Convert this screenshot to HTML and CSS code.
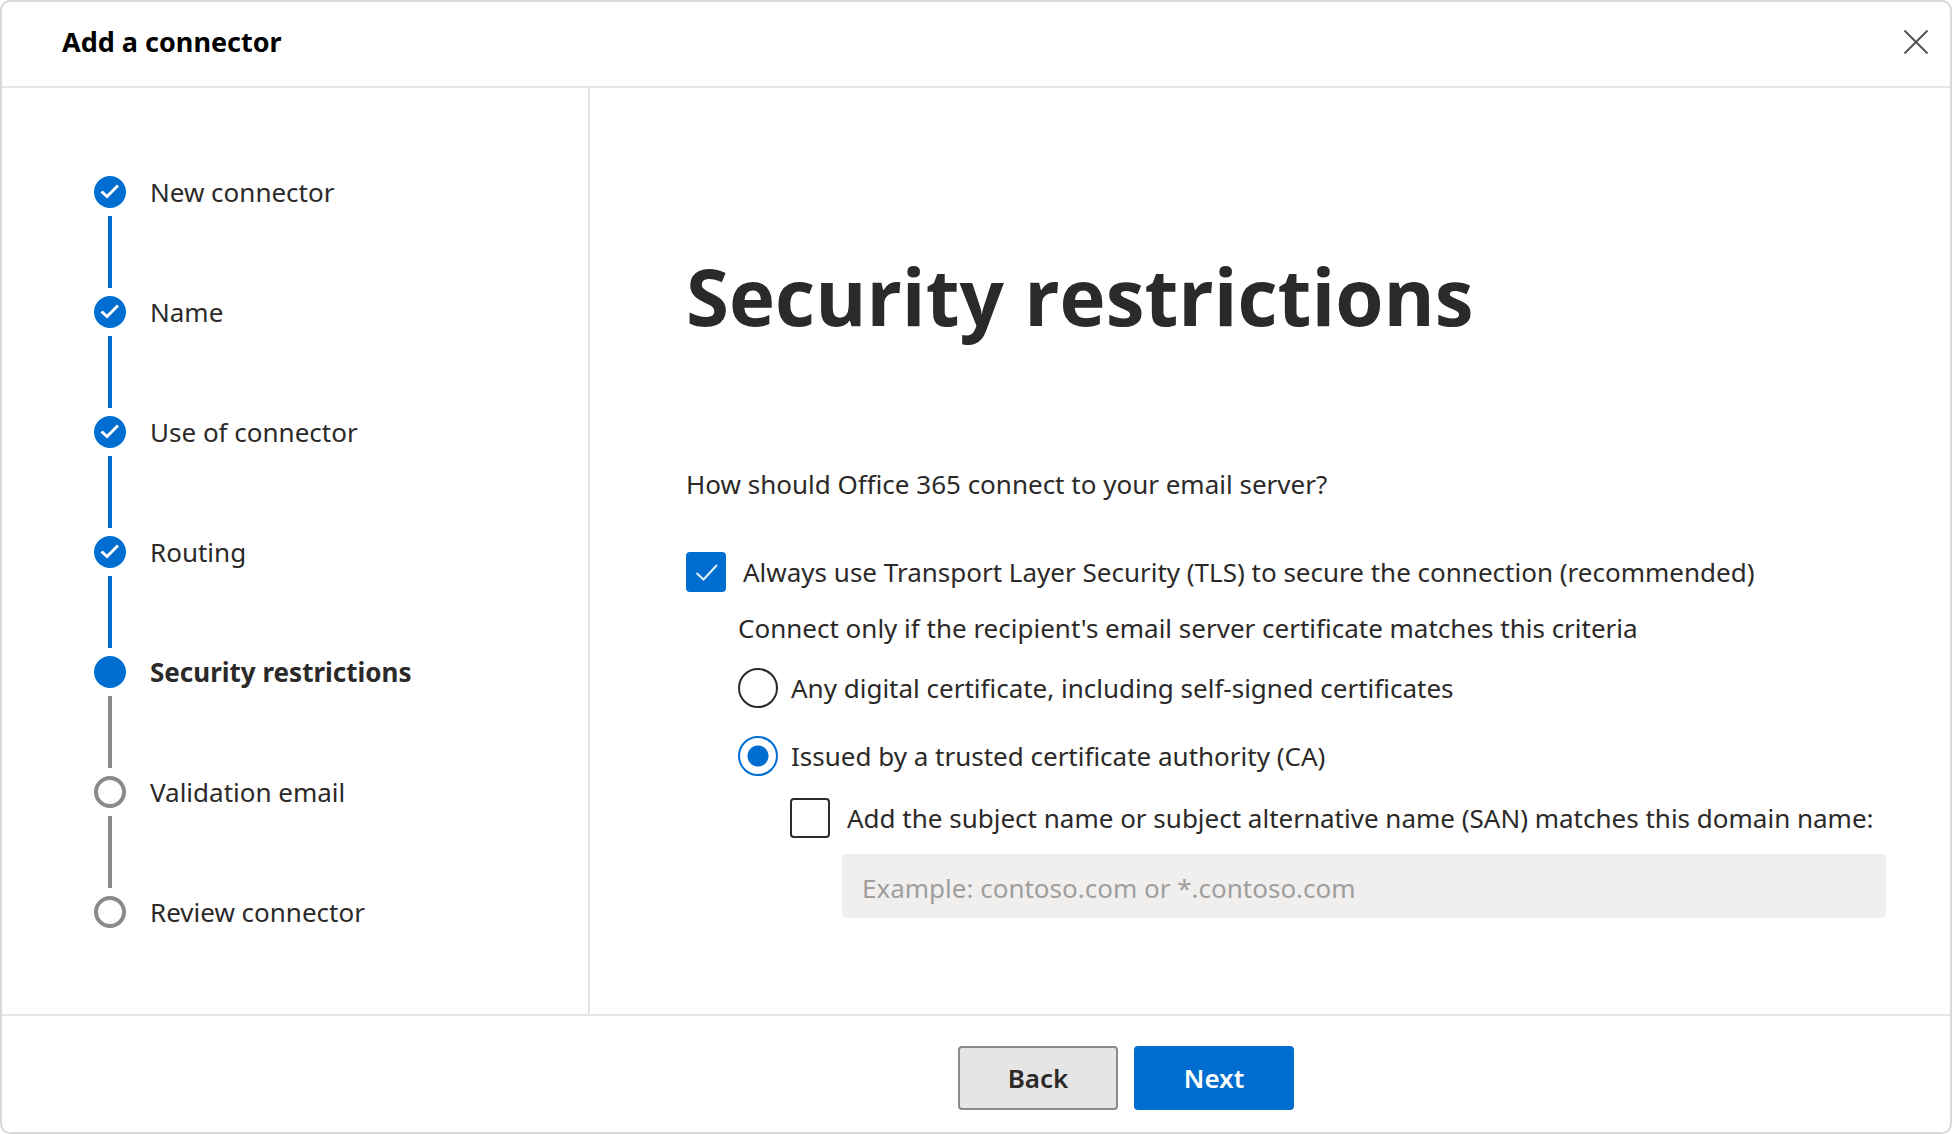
FILE: index.html
```html
<!DOCTYPE html>
<html lang="en">
<head>
<meta charset="utf-8">
<meta name="viewport" content="width=device-width, initial-scale=1">
<title>Add a connector</title>
<link rel="stylesheet" href="styles.css">
</head>
<body>
<form class="panel">
  <header class="panel-header">
    <h2 class="panel-title">Add a connector</h2>
    <button class="close" type="button" aria-label="Close">
      <svg class="close-icon" viewBox="0 0 24 24" aria-hidden="true"><path d="M0.5 0.5 23.5 23.5M23.5 0.5 0.5 23.5"/></svg>
    </button>
  </header>
  <div class="panel-body">
    <nav class="sidebar" aria-label="Progress">
      <ol class="steps">
        <li class="step done"><svg class="dot" viewBox="0 0 32 32" aria-hidden="true"><circle cx="16" cy="16" r="16"/><path d="M7.500 15.500 13 20.500 24 9.500"/></svg><span class="step-label">New connector</span></li>
        <li class="step done"><svg class="dot" viewBox="0 0 32 32" aria-hidden="true"><circle cx="16" cy="16" r="16"/><path d="M7.500 15.500 13 20.500 24 9.500"/></svg><span class="step-label">Name</span></li>
        <li class="step done"><svg class="dot" viewBox="0 0 32 32" aria-hidden="true"><circle cx="16" cy="16" r="16"/><path d="M7.500 15.500 13 20.500 24 9.500"/></svg><span class="step-label">Use of connector</span></li>
        <li class="step done"><svg class="dot" viewBox="0 0 32 32" aria-hidden="true"><circle cx="16" cy="16" r="16"/><path d="M7.500 15.500 13 20.500 24 9.500"/></svg><span class="step-label">Routing</span></li>
        <li class="step current" aria-current="step"><svg class="dot" viewBox="0 0 32 32" aria-hidden="true"><circle cx="16" cy="16" r="16"/></svg><span class="step-label">Security restrictions</span></li>
        <li class="step todo"><svg class="dot" viewBox="0 0 32 32" aria-hidden="true"><circle cx="16" cy="16" r="14"/></svg><span class="step-label">Validation email</span></li>
        <li class="step todo"><svg class="dot" viewBox="0 0 32 32" aria-hidden="true"><circle cx="16" cy="16" r="14"/></svg><span class="step-label">Review connector</span></li>
      </ol>
    </nav>
    <main class="content">
      <h1 class="heading">Security restrictions</h1>
      <p class="question">How should Office 365 connect to your email server?</p>
      <label class="choice choice-box">
        <span class="control"><input class="box" type="checkbox" checked><svg class="tick" viewBox="0 0 24 24" aria-hidden="true"><path d="M2.500 13 9.500 19.500 23 5"/></svg></span>
        <span>Always use Transport Layer Security (TLS) to secure the connection (recommended)</span>
      </label>
      <fieldset class="criteria">
        <legend class="criteria-legend">Connect only if the recipient's email server certificate matches this criteria</legend>
        <label class="choice choice-radio">
          <input class="radio" type="radio" name="certificate">
          <span>Any digital certificate, including self-signed certificates</span>
        </label>
        <label class="choice choice-radio">
          <input class="radio" type="radio" name="certificate" checked>
          <span>Issued by a trusted certificate authority (CA)</span>
        </label>
        <div class="domain">
          <label class="choice choice-box">
            <span class="control"><input class="box" type="checkbox"></span>
            <span>Add the subject name or subject alternative name (SAN) matches this domain name:</span>
          </label>
          <input class="domain-input" type="text" aria-label="Domain name" placeholder="Example: contoso.com or *.contoso.com" disabled>
        </div>
      </fieldset>
    </main>
  </div>
  <footer class="panel-footer">
    <button class="btn btn-secondary" type="button">Back</button>
    <button class="btn btn-primary" type="submit">Next</button>
  </footer>
</form>
</body>
</html>
```
FILE: styles.css
```css
:root {
  --blue: #006dd1;
  --gray: #8a8a88;
  --text: #2b2a29;
  --line: #e6e6e6;
}

* {
  box-sizing: border-box;
}

body {
  margin: 0;
  background: #fff;
  color: var(--text);
  font: 26px/40px "Noto Sans", "Open Sans", sans-serif;
}

h1, h2, p, ol, fieldset, legend {
  margin: 0;
  padding: 0;
}

.panel {
  display: flex;
  flex-direction: column;
  min-height: 100vh;
  border: 2px solid #d9d9d9;
  border-radius: 10px;
}

.panel-header {
  display: flex;
  align-items: center;
  justify-content: space-between;
  padding: 20px 14px 24px 60px;
  border-bottom: 2px solid var(--line);
}

.panel-title {
  color: #000;
  font-size: 27px;
  line-height: 40px;
  font-weight: 700;
}

.close {
  display: flex;
  padding: 8px;
  border: 0;
  background: none;
}

.close-icon {
  width: 24px;
  height: 24px;
  fill: none;
  stroke: #555;
  stroke-width: 2;
}

.panel-body {
  display: flex;
  flex: 1;
}

.sidebar {
  flex: 0 0 588px;
  padding: 84px 24px 64px 92px;
  border-right: 2px solid var(--line);
}

.steps {
  display: flex;
  flex-direction: column;
  gap: 80px;
  list-style: none;
}

.step {
  position: relative;
  display: flex;
  align-items: center;
  gap: 24px;
}

.step:not(:last-child)::after {
  content: "";
  position: absolute;
  left: 14px;
  top: 44px;
  width: 4px;
  height: 72px;
  background: var(--gray);
}

.step.done::after {
  background: var(--blue);
}

.dot {
  flex: none;
  width: 32px;
  height: 32px;
  fill: var(--blue);
}

.dot path {
  fill: none;
  stroke: #fff;
  stroke-width: 3;
}

.todo .dot {
  fill: none;
  stroke: var(--gray);
  stroke-width: 4;
}

.current .step-label {
  font-weight: 700;
}

.content {
  flex: 1;
  padding: 152px 64px 64px 96px;
}

.heading {
  font: 700 78px/112px "Open Sans", "Noto Sans", sans-serif;
}

.question {
  margin: 112px 0 48px;
}

.choice {
  display: flex;
  align-items: center;
}

.choice-box {
  gap: 17px;
}

.choice-radio {
  gap: 13px;
  margin-bottom: 28px;
}

.control {
  position: relative;
  display: flex;
  flex: none;
}

.box, .radio {
  appearance: none;
  flex: none;
  width: 40px;
  height: 40px;
  margin: 0;
  border: 2px solid var(--text);
  background: #fff;
}

.box {
  border-radius: 4px;
}

.box:checked {
  border-color: var(--blue);
  background: var(--blue);
}

.tick {
  position: absolute;
  inset: 8px;
  fill: none;
  stroke: #e6f1fb;
  stroke-width: 2;
}

.radio {
  border-radius: 50%;
}

.radio:checked {
  border-color: var(--blue);
  background: radial-gradient(circle, var(--blue) 10px, #fff 11px);
}

.criteria {
  margin: 16px 0 0 52px;
  border: 0;
}

.criteria-legend {
  margin-bottom: 20px;
}

.domain {
  display: flex;
  flex-direction: column;
  gap: 16px;
  margin: -6px 0 0 52px;
}

.domain-input {
  height: 64px;
  margin-left: 52px;
  padding: 4px 20px 0;
  border: 0;
  border-radius: 4px;
  background: #f0efee;
  font: inherit;
}

.domain-input::placeholder {
  color: #a09e9c;
  opacity: 1;
}

.panel-footer {
  display: flex;
  justify-content: center;
  gap: 16px;
  padding: 30px 0 22px 300px;
  border-top: 2px solid var(--line);
}

.btn {
  width: 160px;
  height: 64px;
  border: 2px solid var(--blue);
  border-radius: 4px;
  font: inherit;
  font-weight: 600;
}

.btn-secondary {
  border-color: #8a8a88;
  background: #e5e5e5;
  color: var(--text);
}

.btn-primary {
  background: var(--blue);
  color: #fff;
}
```
